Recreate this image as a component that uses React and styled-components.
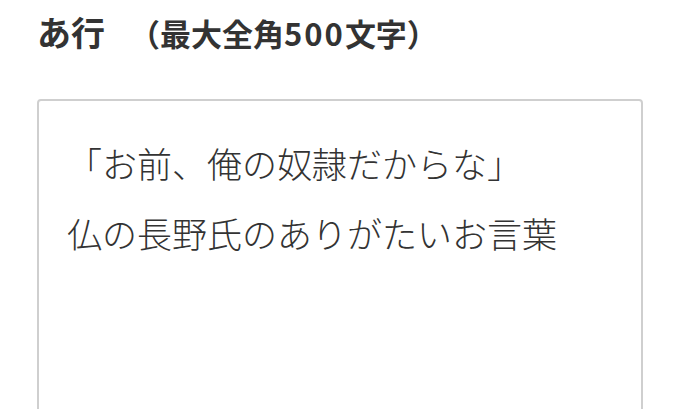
import React from "react";
import styled, { createGlobalStyle } from "styled-components";

const Global = createGlobalStyle`
  html, body { margin: 0; padding: 0; background: #fff; }
  body {
    font-family: "Noto Sans CJK JP", "Noto Sans", sans-serif;
    text-spacing-trim: space-all;
  }
`;

const Page = styled.div`
  width: 680px;
  height: 409px;
  overflow: hidden;
  padding: 11px 37px 0 37px;
  box-sizing: border-box;
`;

const Title = styled.h2`
  margin: 0;
  font-size: 34px;
  line-height: 42px;
  font-weight: 700;
  color: #333;
  display: flex;
  align-items: baseline;
`;

const Note = styled.span`
  margin-left: 24px;
  font-size: 31px;
  font-weight: 700;
`;

const Digits = styled.span`
  letter-spacing: 2px;
`;

const Box = styled.div`
  margin-top: 45px;
  width: 606px;
  height: 340px;
  box-sizing: border-box;
  border: 2px solid #cfcfcf;
  border-radius: 4px;
  padding: 27px 20px 28px 28px;
`;

const Line = styled.p`
  margin: 0;
  font-size: 35px;
  line-height: 70px;
  font-weight: 300;
  color: #333;
  white-space: nowrap;
`;

export default function App() {
  return (
    <Page>
      <Global />
      <Title>
        あ行
        <Note>
          （最大全角<Digits>500</Digits>文字）
        </Note>
      </Title>
      <Box>
        <Line>「お前、俺の奴隷だからな」</Line>
        <Line>仏の長野氏のありがたいお言葉</Line>
      </Box>
    </Page>
  );
}
